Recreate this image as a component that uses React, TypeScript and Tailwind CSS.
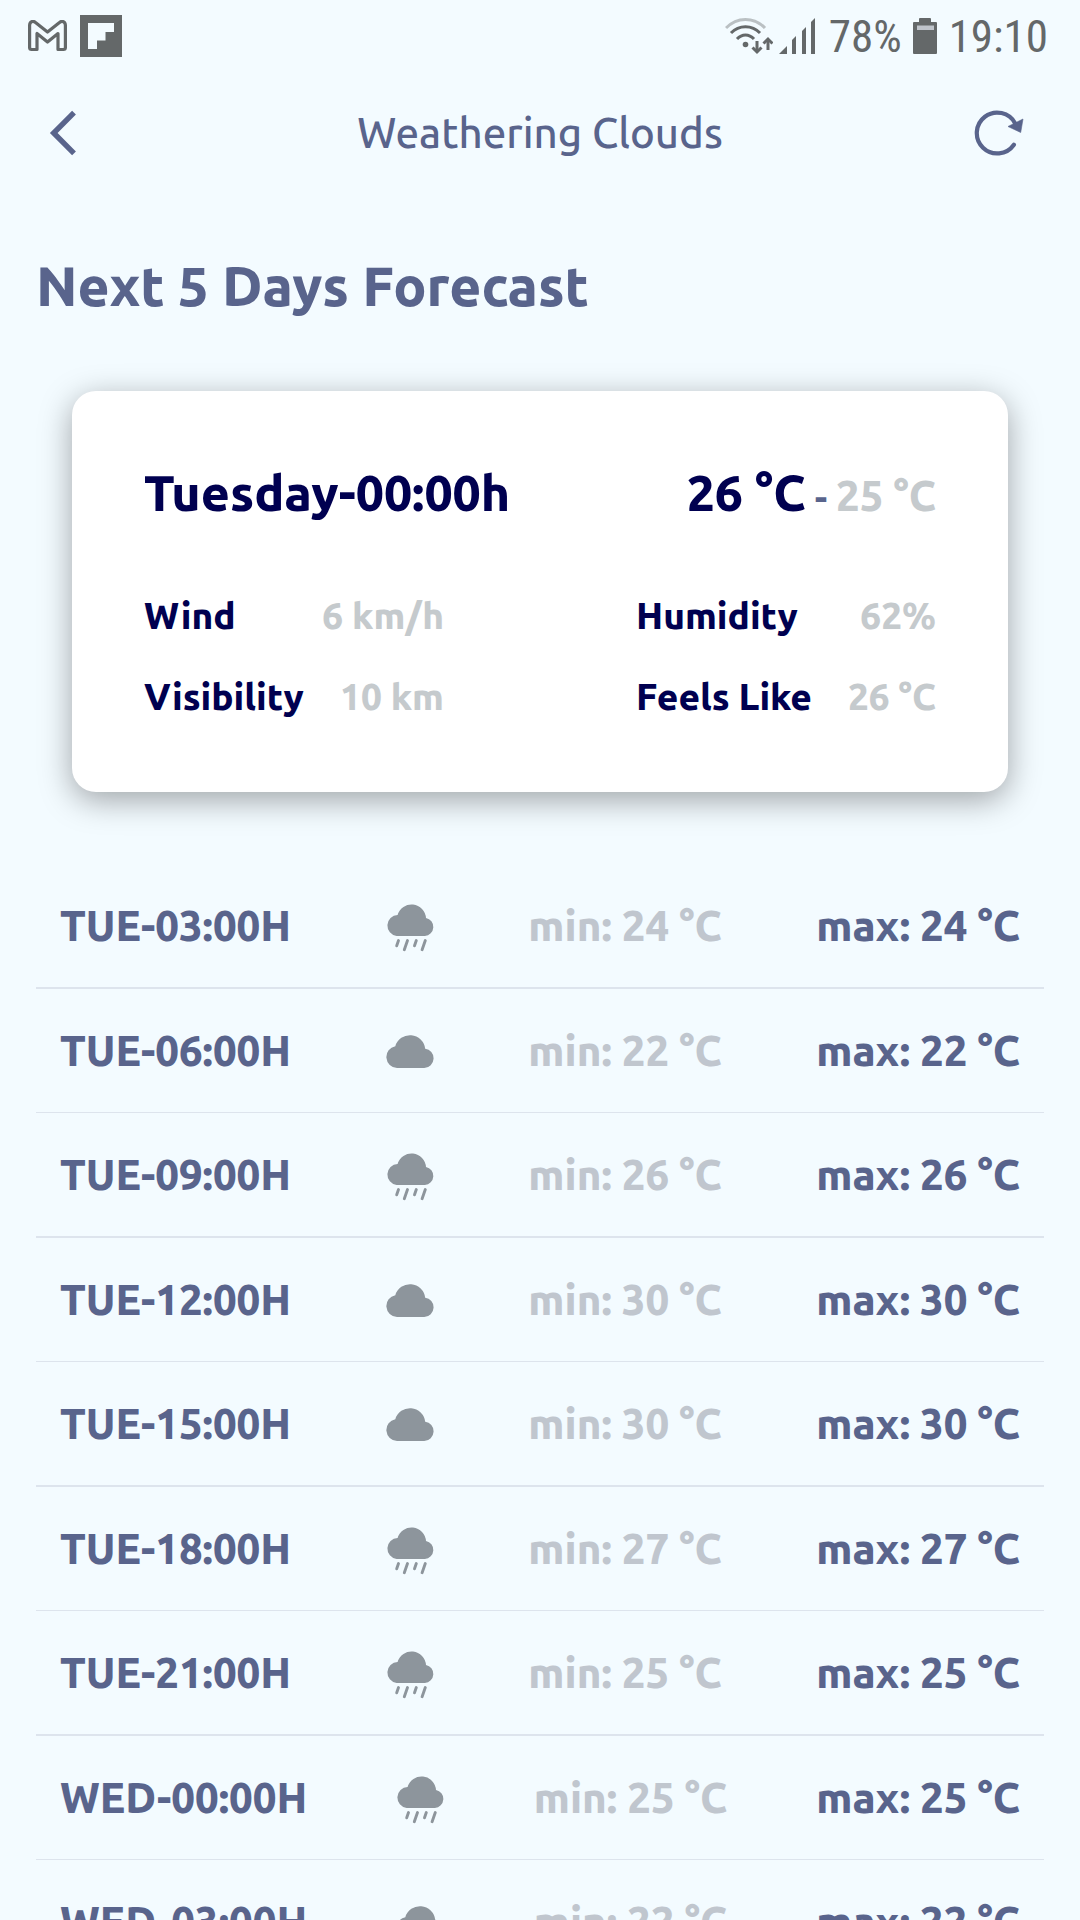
type Sky = "rain" | "cloud";

const hours: { time: string; sky: Sky; temp: number }[] = [
  { time: "TUE-03:00H", sky: "rain", temp: 24 },
  { time: "TUE-06:00H", sky: "cloud", temp: 22 },
  { time: "TUE-09:00H", sky: "rain", temp: 26 },
  { time: "TUE-12:00H", sky: "cloud", temp: 30 },
  { time: "TUE-15:00H", sky: "cloud", temp: 30 },
  { time: "TUE-18:00H", sky: "rain", temp: 27 },
  { time: "TUE-21:00H", sky: "rain", temp: 25 },
  { time: "WED-00:00H", sky: "rain", temp: 25 },
  { time: "WED-03:00H", sky: "cloud", temp: 22 },
];

const details = [
  { label: "Wind", value: "6 km/h" },
  { label: "Humidity", value: "62%" },
  { label: "Visibility", value: "10 km" },
  { label: "Feels Like", value: "26 °C" },
];

function GmailIcon() {
  return (
    <svg className="h-8 w-10" viewBox="0 0 40 32" fill="none" stroke="currentColor" strokeWidth="3.200" strokeLinejoin="round">
      <path d="M1.600 27.500V5.500C1.600 1.500 5 .3 7.500 2.500L19.500 12L31.500 2.500C34 .3 37.400 1.500 37.400 5.500V27.500Q37.400 29.500 35.400 29.500H30V13.500L19.500 22L9 13.500V29.500H3.600Q1.600 29.500 1.600 27.500Z" />
    </svg>
  );
}

function FlipboardIcon() {
  return (
    <svg className="size-[42px]" viewBox="0 0 42 42">
      <path d="M0 0h42v42H0z" fill="currentColor" />
      <path d="M8 8h26v9h-8.500v8.500H17V34H8z" fill="#f3fbff" />
    </svg>
  );
}

function WifiIcon() {
  return (
    <svg className="h-[38px] w-12" viewBox="0 0 48 38" fill="none" stroke="currentColor" strokeWidth="3">
      <path d="M1 11C12 -.5 29 -.5 40 11" opacity=".4" />
      <path d="M6 16C14 7.500 27 7.500 35 16" />
      <path d="M12 22C17 16.500 24 16.500 29 22" />
      <circle cx="20.500" cy="27.500" r="2.800" fill="currentColor" stroke="none" />
      <path d="M32 24V34M43 33V23" />
      <path d="M27.500 30.500l4.500 4.500 4.500-4.500M38.500 26.500l4.500-4.500 4.500 4.500" />
    </svg>
  );
}

function SignalIcon() {
  return (
    <svg className="h-9 w-9" viewBox="0 0 36 36" fill="currentColor">
      <path d="M0 36L8 28V36ZM13 36V22L17 18V36ZM23 36V13L27 9V36ZM32 36V4L36 0V36Z" />
    </svg>
  );
}

function BatteryIcon() {
  return (
    <svg className="h-9 w-6" viewBox="0 0 24 36">
      <path d="M1 4H6V1Q6 0 7 0H17Q18 0 18 1V4H23Q24 4 24 5V35Q24 36 23 36H1Q0 36 0 35V5Q0 4 1 4Z" fill="currentColor" />
      <path d="M4 7.500H21V12H4Z" fill="#bfc4cb" />
    </svg>
  );
}

function BackIcon() {
  return (
    <svg className="size-16" viewBox="0 0 64 64" fill="none" stroke="currentColor" strokeWidth="5.400">
      <path d="M42 11.700L21.700 32L42 52.300" />
    </svg>
  );
}

function RefreshIcon() {
  return (
    <svg className="size-16" viewBox="0 0 64 64">
      <path d="M45.900 43.700A20.400 20.400 0 1 1 47.200 22.400" fill="none" stroke="currentColor" strokeWidth="4.200" strokeLinecap="round" />
      <path d="M55 18L52.700 31.500L40 25.500Z" fill="currentColor" stroke="currentColor" strokeWidth=".6" strokeLinejoin="round" />
    </svg>
  );
}

function RainIcon() {
  return (
    <svg className="h-[52px] w-12 shrink-0" viewBox="0 -6 48 52" fill="currentColor" role="img" aria-label="Rain">
      <path d="M10.600 30A10.600 10.600 0 0 1 11.600 8.900A14.500 14.500 0 0 1 40 12A9.100 9.100 0 0 1 38.900 30Z" />
      <path d="M12.500 34.500L10.700 39.800M21.500 34.500L18.300 43.700M30.300 34.500L28.500 39.800M39.300 34.500L36.100 43.700" stroke="currentColor" strokeWidth="2.900" strokeLinecap="round" />
    </svg>
  );
}

function CloudIcon() {
  return (
    <svg className="h-[52px] w-12 shrink-0" viewBox="0 -10 48 52" fill="currentColor" role="img" aria-label="Cloudy">
      <path d="M11 33A11 11 0 0 1 9.300 11.200A15.300 15.300 0 0 1 39.200 13.700A9.700 9.700 0 0 1 38.300 33Z" />
    </svg>
  );
}

export default function App() {
  return (
    <div className="h-screen overflow-hidden bg-[#f3fbff] font-['Ubuntu','Noto_Sans',sans-serif] text-[#59648c]">
      <div className="flex h-[72px] items-center justify-between pr-8 pl-7 font-['Roboto_Condensed',Roboto,sans-serif] text-[45px] leading-none text-[#646869]">
        <div className="flex items-center gap-3">
          <GmailIcon />
          <FlipboardIcon />
        </div>
        <div className="flex items-center">
          <WifiIcon />
          <span className="ml-1.5">
            <SignalIcon />
          </span>
          <span className="ml-3.5">78%</span>
          <span className="ml-[11px]">
            <BatteryIcon />
          </span>
          <span className="ml-3">19:10</span>
        </div>
      </div>

      <header className="flex h-[122px] items-center justify-between px-8">
        <button type="button" aria-label="Back" className="flex w-24">
          <BackIcon />
        </button>
        <h1 className="text-[42px] leading-[50px] font-medium">Weathering Clouds</h1>
        <button type="button" aria-label="Refresh" className="flex w-24 justify-center">
          <RefreshIcon />
        </button>
      </header>

      <main>
        <h2 className="mx-9 mt-[60px] text-[55px] leading-[64px] font-extrabold">Next 5 Days Forecast</h2>

        <section className="mx-[72px] mt-[73px] rounded-3xl bg-white px-[72px] py-[73px] font-extrabold text-[#000050] shadow-[0_8px_32px_rgba(0,0,0,0.35)]">
          <div className="flex items-baseline justify-between text-[50px] leading-[57px]">
            <h3>Tuesday-00:00h</h3>
            <p>
              26 °C<span className="text-[38px] font-bold text-[#59648c]"> - </span>
              <span className="text-[42px] text-[#c5cacd]">25 °C</span>
            </p>
          </div>
          <dl className="mt-[68px] grid grid-cols-2 gap-x-48 gap-y-[37px] text-[37px] leading-[44px]">
            {details.map((d) => (
              <div key={d.label} className="flex justify-between whitespace-nowrap">
                <dt>{d.label}</dt>
                <dd className="text-[#c5cacd]">{d.value}</dd>
              </div>
            ))}
          </dl>
        </section>

        <ul className="mx-9 mt-[72px] text-[42px] leading-[51px] font-extrabold">
          {hours.map((h) => (
            <li key={h.time} className="border-b border-[#dde4ed] odd:border-b-2">
              <div className="flex h-[123px] items-center justify-between px-6 whitespace-nowrap">
                <span>{h.time}</span>
                <span className="flex text-[#8d959c]">{h.sky === "rain" ? <RainIcon /> : <CloudIcon />}</span>
                <span className="text-[#c0c6ce]">min: {h.temp} °C</span>
                <span>max: {h.temp} °C</span>
              </div>
            </li>
          ))}
        </ul>
      </main>
    </div>
  );
}
